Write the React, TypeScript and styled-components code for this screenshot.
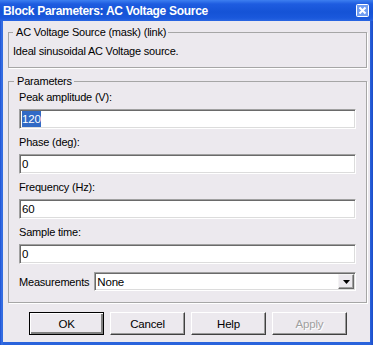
import styled, { createGlobalStyle } from "styled-components";

const GlobalStyle = createGlobalStyle`
  html, body {
    margin: 0;
    padding: 0;
    background: #ece9ee;
  }
  body {
    font-family: "Liberation Sans", Arial, sans-serif;
    color: #000;
  }
`;

const Window = styled.div`
  width: 373px;
  height: 345px;
  box-sizing: border-box;
  display: flex;
  flex-direction: column;
  padding: 0 3px 3px 3px;
  background: linear-gradient(90deg, #1d4fd2 0px, #3a75e6 2px, #2a63dc 3px, #2a63dc 370px, #1b4cc9 373px);
`;

const TitleBar = styled.div`
  height: 21px;
  margin: 0 -3px;
  padding: 0 4px 0 3px;
  display: flex;
  align-items: center;
  justify-content: space-between;
  background: linear-gradient(#3d7ff0 0px, #1e5ce0 4px, #1553d6 12px, #1a58dc 18px, #2a66e2 21px);
`;

const Title = styled.span`
  color: #fff;
  font-size: 12px;
  font-weight: bold;
  letter-spacing: -0.3px;
  white-space: nowrap;
`;

const Body = styled.div`
  flex: 1;
  display: flex;
  flex-direction: column;
  background: #ece9ee;
  padding: 4px 3px 0 5px;
`;

const GroupBox = styled.fieldset<{ $padX: number; $padTop: number; $padBottom: number }>`
  margin: 0;
  min-width: 0;
  padding: ${(p) => p.$padTop}px ${(p) => p.$padX}px ${(p) => p.$padBottom}px;
  border: 1px solid #a6a6a6;
  box-shadow: 1px 1px 0 #fff;
  & + & {
    margin-top: 6px;
  }
`;

const Legend = styled.legend<{ $offset: number }>`
  margin-left: ${(p) => p.$offset}px;
  padding: 0 2px 0 3px;
  font-size: 11px;
  letter-spacing: -0.2px;
  line-height: 14px;
`;

const Text = styled.div`
  font-size: 11px;
  letter-spacing: -0.2px;
  line-height: 14px;
  height: 14px;
  white-space: nowrap;
`;

const Field = styled.div`
  & + & {
    margin-top: 6px;
  }
`;

const Label = styled(Text)`
  margin-bottom: 5px;
`;

const TextBox = styled.div`
  height: 20px;
  box-sizing: border-box;
  background: #fff;
  border: 1px solid;
  border-color: #a0a0a0 #fff #fff #a0a0a0;
  box-shadow: inset 1px 1px 0 #6a6a6a, inset -1px -1px 0 #dcdcdc;
  display: flex;
  align-items: center;
  padding-left: 2px;
  font-size: 11.5px;
  letter-spacing: -0.2px;
`;

const Selected = styled.span`
  background: #316ac5;
  color: #fff;
  padding: 1px 0;
  line-height: 14px;
`;

const Row = styled.div`
  display: flex;
  align-items: center;
  gap: 5px;
  margin-top: 8px;
`;

const Select = styled(TextBox)`
  flex: 1;
  height: 19px;
  justify-content: space-between;
  padding-right: 1px;
`;

const DropButton = styled.div`
  width: 16px;
  height: 15px;
  box-sizing: border-box;
  background: #ece9ee;
  border: 1px solid;
  border-color: #f4f4f4 #6a6a6a #6a6a6a #f4f4f4;
  box-shadow: inset -1px -1px 0 #a0a0a0;
  display: flex;
  align-items: center;
  justify-content: center;
`;

const ButtonRow = styled.div`
  display: flex;
  gap: 6px;
  padding: 9px 0 0 21px;
`;

const Button = styled.div<{ $default?: boolean; $disabled?: boolean }>`
  width: 75px;
  height: 23px;
  box-sizing: border-box;
  display: flex;
  align-items: center;
  justify-content: center;
  font-size: 11.5px;
  letter-spacing: -0.2px;
  background: #ece9ee;
  border: 1px solid;
  border-color: ${(p) => (p.$default ? "#000" : "#fff #404040 #404040 #fff")};
  box-shadow: ${(p) =>
    p.$default
      ? "inset 1px 1px 0 #fff, inset -2px -2px 0 #808080"
      : "inset -1px -1px 0 #9a9a9a"};
  color: ${(p) => (p.$disabled ? "#a0a0a0" : "#000")};
  text-shadow: ${(p) => (p.$disabled ? "1px 1px 0 #fff" : "none")};
`;

function CloseIcon() {
  return (
    <svg width="13" height="13" viewBox="0 0 13 13">
      <rect x="0.5" y="0.5" width="12" height="12" rx="1" fill="#6f9cf2" stroke="#ffffff" />
      <path d="M3.5 3.5 L9.5 9.5 M9.5 3.5 L3.5 9.5" stroke="#fff" strokeWidth="2" />
    </svg>
  );
}

function ArrowDown() {
  return (
    <svg width="7" height="4" viewBox="0 0 7 4">
      <path d="M0 0 H7 L3.5 4 Z" fill="#000" />
    </svg>
  );
}

const fields = [
  { label: "Phase (deg):", value: "0" },
  { label: "Frequency (Hz):", value: "60" },
  { label: "Sample time:", value: "0" },
];

function App() {
  return (
    <>
      <GlobalStyle />
      <Window>
        <TitleBar>
          <Title>Block Parameters: AC Voltage Source</Title>
          <CloseIcon />
        </TitleBar>
        <Body>
          <GroupBox $padX={4} $padTop={5} $padBottom={9}>
            <Legend $offset={0}>AC Voltage Source (mask) (link)</Legend>
            <Text>Ideal sinusoidal AC Voltage source.</Text>
          </GroupBox>
          <GroupBox $padX={10} $padTop={2} $padBottom={11}>
            <Legend $offset={-5}>Parameters</Legend>
            <Field>
              <Label>Peak amplitude (V):</Label>
              <TextBox>
                <Selected>120</Selected>
              </TextBox>
            </Field>
            {fields.map((f) => (
              <Field key={f.label}>
                <Label>{f.label}</Label>
                <TextBox>{f.value}</TextBox>
              </Field>
            ))}
            <Row>
              <Text>Measurements</Text>
              <Select>
                <span>None</span>
                <DropButton>
                  <ArrowDown />
                </DropButton>
              </Select>
            </Row>
          </GroupBox>
          <ButtonRow>
            <Button $default>OK</Button>
            <Button>Cancel</Button>
            <Button>Help</Button>
            <Button $disabled>Apply</Button>
          </ButtonRow>
        </Body>
      </Window>
    </>
  );
}

export default App;
